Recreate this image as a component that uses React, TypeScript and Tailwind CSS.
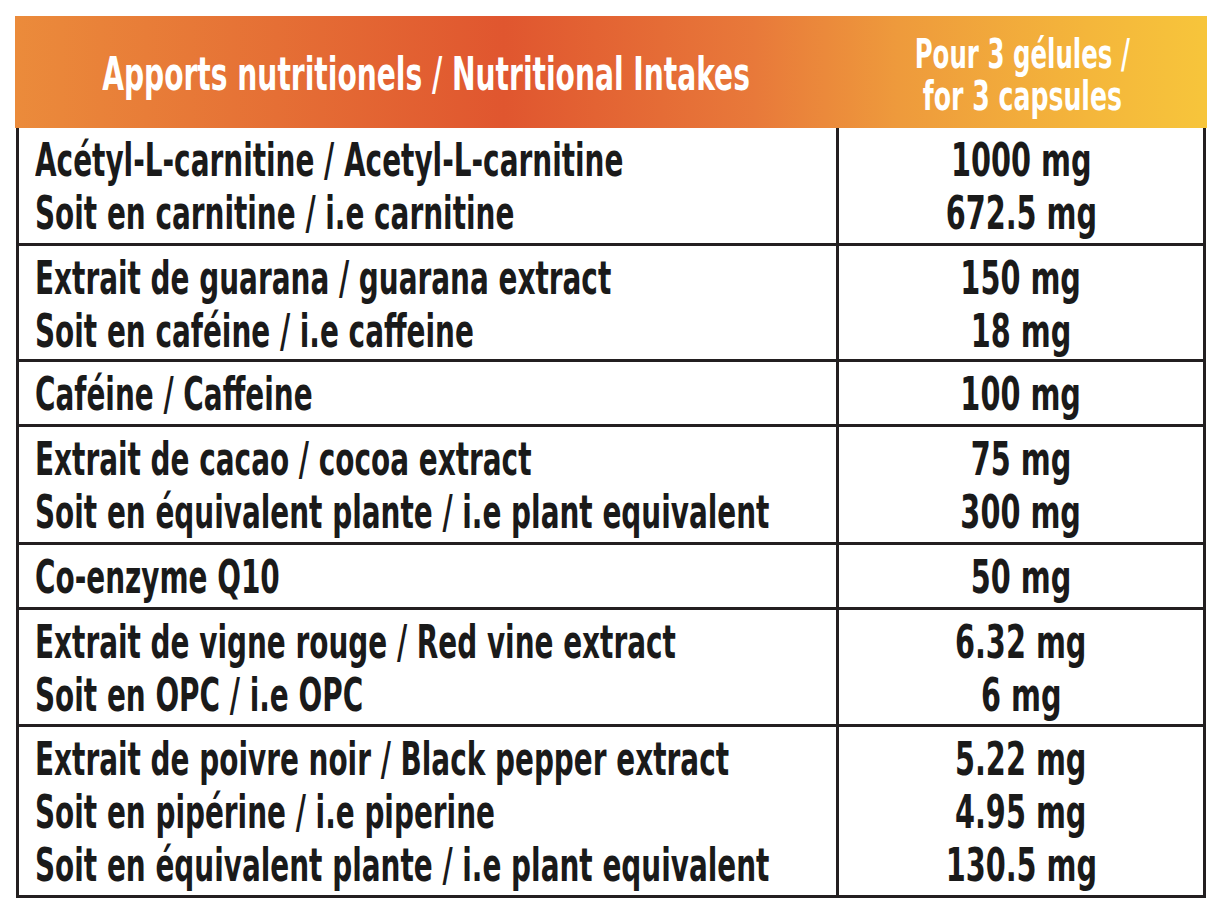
import React from "react";

type Row = { labels: string[]; values: string[]; h: string };

const rows: Row[] = [
  {
    labels: ["Acétyl-L-carnitine / Acetyl-L-carnitine", "Soit en carnitine / i.e carnitine"],
    values: ["1000 mg", "672.5 mg"],
    h: "h-[115px]",
  },
  {
    labels: ["Extrait de guarana / guarana extract", "Soit en caféine / i.e caffeine"],
    values: ["150 mg", "18 mg"],
    h: "h-[116px]",
  },
  { labels: ["Caféine / Caffeine"], values: ["100 mg"], h: "h-[65px]" },
  {
    labels: ["Extrait de cacao / cocoa extract", "Soit en équivalent plante / i.e plant equivalent"],
    values: ["75 mg", "300 mg"],
    h: "h-[118px]",
  },
  { labels: ["Co-enzyme Q10"], values: ["50 mg"], h: "h-[65px]" },
  {
    labels: ["Extrait de vigne rouge / Red vine extract", "Soit en OPC / i.e OPC"],
    values: ["6.32 mg", "6 mg"],
    h: "h-[117px]",
  },
  {
    labels: [
      "Extrait de poivre noir / Black pepper extract",
      "Soit en pipérine / i.e piperine",
      "Soit en équivalent plante / i.e plant equivalent",
    ],
    values: ["5.22 mg", "4.95 mg", "130.5 mg"],
    h: "h-[171px]",
  },
];

const font = "font-['DejaVu_Sans_Condensed','Liberation_Sans_Narrow',sans-serif]";

export default function App() {
  return (
    <div className={`w-[1222px] h-[912px] bg-white pt-4 pl-[15px] ${font}`}>
      <div className="w-[1192px]">
        <div className="flex h-[112px] text-white font-bold bg-[linear-gradient(90deg,#EB8B3B_0%,#E56F35_22%,#E0562F_41%,#E8793A_62%,#EE9A3C_74%,#F4B63B_90%,#F7C53B_100%)]">
          <div className="w-[822px] flex items-center justify-center pt-[3px]">
            <span className="inline-block scale-x-[0.665] whitespace-nowrap text-[47px] leading-none">
              Apports nutritionels / Nutritional Intakes
            </span>
          </div>
          <div className="flex-1 flex flex-col items-center justify-center text-[40px] leading-[42px] pt-[6px]">
            <span className="inline-block scale-x-[0.68] whitespace-nowrap">Pour 3 gélules /</span>
            <span className="inline-block scale-x-[0.7] whitespace-nowrap">for 3 capsules</span>
          </div>
        </div>
        <div className="ml-px w-[1190px] border-x-[3px] border-b-[3px] border-[#231f20] text-[#1a1a1a] font-bold text-[47px] leading-[53px]">
          {rows.map((r, i) => (
            <div
              key={i}
              className={`flex box-border ${r.h} ${i > 0 ? "border-t-[3px] border-[#231f20]" : ""}`}
            >
              <div className="w-[817px] pl-[16px] pt-[5px] flex flex-col">
                {r.labels.map((l, j) => (
                  <span key={j} className="block origin-left scale-x-[0.66] whitespace-nowrap">
                    {l}
                  </span>
                ))}
              </div>
              <div className="flex-1 border-l-[3px] border-[#231f20] pt-[5px] flex flex-col items-center">
                {r.values.map((v, j) => (
                  <span key={j} className="inline-block scale-x-[0.68] whitespace-nowrap">
                    {v}
                  </span>
                ))}
              </div>
            </div>
          ))}
        </div>
      </div>
    </div>
  );
}
